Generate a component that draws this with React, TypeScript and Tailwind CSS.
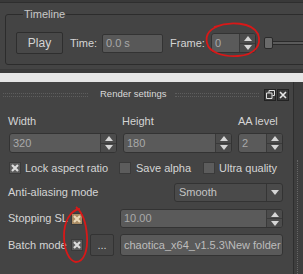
import React from 'react';

const font = { fontFamily: '"Liberation Sans", Arial, sans-serif' };

function Arrows() {
  return (
    <div className="flex w-[16px] shrink-0 flex-col border-l border-[#3a3a3a] bg-[#4c4c4c]">
      <div className="flex flex-1 items-center justify-center border-b border-[#3a3a3a]">
        <svg width="8" height="5" viewBox="0 0 8 5">
          <path d="M0 5 L4 0 L8 5 Z" fill="#d6d6d6" />
        </svg>
      </div>
      <div className="flex flex-1 items-center justify-center">
        <svg width="8" height="5" viewBox="0 0 8 5">
          <path d="M0 0 L4 5 L8 0 Z" fill="#d6d6d6" />
        </svg>
      </div>
    </div>
  );
}

function Spin({ value, className }: { value: string; className: string }) {
  return (
    <div className={`flex shrink-0 overflow-hidden rounded-[3px] border border-[#333] bg-[#5a5a5a] ${className}`}>
      <div className="flex flex-1 items-center pl-[3px] text-[#a9a9a9]">{value}</div>
      <Arrows />
    </div>
  );
}

function Check({ checked, hot }: { checked?: boolean; hot?: boolean }) {
  return (
    <div
      className={`flex h-[12px] w-[12px] shrink-0 items-center justify-center border border-[#3a3a3a] ${
        hot ? 'bg-[#a88a62]' : 'bg-[#5c5c5c]'
      }`}
    >
      {checked && (
        <svg width="8" height="8" viewBox="0 0 8 8">
          <path d="M1 1 L7 7 M7 1 L1 7" stroke={hot ? '#ead8b8' : '#dcdcdc'} strokeWidth="2.2" />
        </svg>
      )}
    </div>
  );
}

function Grip({ className }: { className: string }) {
  return <div className={`h-[4px] shrink-0 border-y border-dotted border-[#5e5e5e] ${className}`} />;
}

export default function App() {
  return (
    <div
      className="relative h-[274px] w-[303px] overflow-hidden whitespace-nowrap bg-[#3c3c3c] text-[11px] text-[#d4d4d4]"
      style={font}
    >
      {/* timeline panel */}
      <div className="h-[3px] border-b border-[#2e2e2e] bg-[#393939]" />
      <div className="h-[66px] overflow-hidden bg-[#444] pt-[5px]">
        <fieldset className="ml-[5px] mr-[-20px] rounded-[3px] border border-[#2c2c2c] pb-[10px] pl-[10px] pt-[12px]">
          <legend className="ml-[7px] px-[1px] text-[11px] leading-[12px] text-[#c8c8c8]">Timeline</legend>
          <div className="flex items-center">
            <div className="flex h-[22px] w-[47px] shrink-0 items-center justify-center rounded-[2px] border border-[#2e2e2e] bg-[#484848] text-[12px]">
              Play
            </div>
            <span className="ml-[7px] w-[32px] shrink-0">Time:</span>
            <div className="flex h-[19px] w-[61px] shrink-0 items-center rounded-[2px] border border-[#333] bg-[#585858] pl-[3px] text-[#a9a9a9]">
              0.0 s
            </div>
            <span className="ml-[7px] w-[41px] shrink-0">Frame:</span>
            <Spin value="0" className="h-[20px] w-[45px]" />
            <div className="ml-[8px] flex items-center">
              <div className="h-[12px] w-[9px] shrink-0 rounded-[2px] border border-[#2a2a2a] bg-[#6a6a6a]" />
              <div className="h-[4px] w-[60px] shrink-0 border-y border-[#2a2a2a] bg-[#5a5a5a]" />
            </div>
          </div>
        </fieldset>
      </div>
      <div className="h-[4px] bg-[#3a3a3a]" />
      <div className="h-[9px] bg-[#e6e6e6]" />

      {/* render settings dock */}
      <div className="flex h-[192px]">
        <div className="w-[293px] shrink-0 bg-[#444]">
          <div className="flex h-[24px] items-center pt-[1px]">
            <Grip className="ml-[3px] w-[85px]" />
            <span className="ml-[12px] w-[63px] shrink-0 text-[9.5px] text-[#d8d8d8]">Render settings</span>
            <Grip className="ml-[12px] w-[84px]" />
            <div className="ml-[5px] flex gap-[1px]">
              <div className="flex h-[12px] w-[12px] items-center justify-center border border-[#222] bg-[#3a3a3a]">
                <svg width="9" height="9" viewBox="0 0 9 9">
                  <path d="M3 0.5 H8.5 V5.5 H6.5 M0.5 3 H6 V8.5 H0.5 Z" fill="none" stroke="#e0e0e0" strokeWidth="1" />
                  <path d="M3 0.5 V3" stroke="#e0e0e0" />
                </svg>
              </div>
              <div className="flex h-[12px] w-[12px] items-center justify-center border border-[#222] bg-[#3a3a3a]">
                <svg width="8" height="8" viewBox="0 0 8 8">
                  <path d="M1 1 L7 7 M7 1 L1 7" stroke="#e8e8e8" strokeWidth="1.6" />
                </svg>
              </div>
            </div>
          </div>

          <div className="pl-[9px] pt-[8px]">
            <div className="grid grid-cols-[108px_109px_45px] gap-x-[6px]">
              <span className="ml-[-1px] leading-[14px]">Width</span>
              <span className="ml-[-1px] leading-[14px]">Height</span>
              <span className="leading-[14px]">AA level</span>
              <Spin value="320" className="mt-[5px] h-[20px]" />
              <Spin value="180" className="mt-[5px] h-[20px]" />
              <Spin value="2" className="mt-[5px] h-[20px]" />
            </div>

            <div className="mt-[8px] flex h-[14px] items-center">
              <Check checked />
              <span className="ml-[4px] w-[94px] shrink-0">Lock aspect ratio</span>
              <Check />
              <span className="ml-[5px] w-[67px] shrink-0">Save alpha</span>
              <Check />
              <span className="ml-[4px]">Ultra quality</span>
            </div>

            <div className="mt-[8px] flex items-center">
              <span className="ml-[-1px] w-[166px] shrink-0">Anti-aliasing mode</span>
              <div className="flex h-[19px] w-[109px] shrink-0 overflow-hidden rounded-[3px] border border-[#333] bg-[#4a4a4a]">
                <span className="flex flex-1 items-center pl-[4px] text-[#c4c4c4]">Smooth</span>
                <div className="flex w-[16px] items-center justify-center border-l border-[#353535]">
                  <svg width="8" height="5" viewBox="0 0 8 5">
                    <path d="M0 0 L4 5 L8 0 Z" fill="#d6d6d6" />
                  </svg>
                </div>
              </div>
            </div>

            <div className="mt-[7px] flex items-center">
              <span className="ml-[-1px] w-[63px] shrink-0">Stopping SL</span>
              <Check checked hot />
              <Spin value="10.00" className="ml-[37px] h-[19px] w-[163px]" />
            </div>

            <div className="mt-[6px] flex items-center">
              <span className="ml-[-1px] w-[63px] shrink-0">Batch mode</span>
              <Check checked />
              <div className="ml-[7px] flex h-[22px] w-[24px] shrink-0 items-center justify-center rounded-[2px] border border-[#333] bg-[#464646]">
                ...
              </div>
              <div className="ml-[6px] flex h-[22px] w-[163px] shrink-0 items-center overflow-hidden rounded-[3px] border border-[#333] bg-[#5a5a5a] pl-[3px] text-[#bdbdbd]">
                chaotica_x64_v1.5.3\New folder
              </div>
            </div>
          </div>
        </div>
        <div className="w-[10px] border-l border-[#2e2e2e] bg-[#3e3e3e] pl-[3px] pt-[78px]">
          <div className="h-full w-[2px] border-l border-dotted border-[#666]" />
        </div>
      </div>

      {/* red hand-drawn marks */}
      <svg className="pointer-events-none absolute left-0 top-0" width="303" height="274" viewBox="0 0 303 274">
        <path
          d="M214 27 C230 21 252 22 258 34 C262 45 255 55 238 56 C222 57 209 52 207 43 C205 34 210 28 222 25"
          fill="none"
          stroke="#d81818"
          strokeWidth="1.8"
        />
        <path
          d="M80 209 C70 210 64 222 64 236 C64 250 69 261 76 262 C84 262 88 250 87 236 C86 222 82 212 76 207"
          fill="none"
          stroke="#d81818"
          strokeWidth="1.8"
        />
      </svg>
    </div>
  );
}
